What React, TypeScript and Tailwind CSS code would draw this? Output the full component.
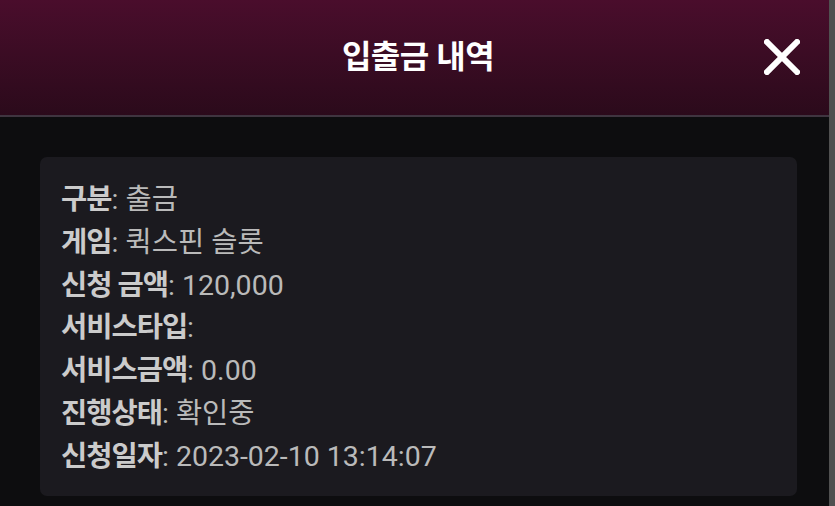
import React from 'react';

const rows: { label: string; value: string }[] = [
  { label: '구분', value: '출금' },
  { label: '게임', value: '퀵스핀 슬롯' },
  { label: '신청 금액', value: '120,000' },
  { label: '서비스타입', value: '' },
  { label: '서비스금액', value: '0.00' },
  { label: '진행상태', value: '확인중' },
  { label: '신청일자', value: '2023-02-10 13:14:07' },
];

export default function App() {
  return (
    <div
      className="flex w-[835px] h-[506px] overflow-hidden bg-[#0d0d0f]"
      style={{ fontFamily: 'Roboto, "Noto Sans CJK KR", sans-serif' }}
    >
      <div className="flex-1 min-w-0 flex flex-col">
        {/* 헤더 */}
        <div className="relative h-[117px] shrink-0 bg-gradient-to-b from-[#4a0d2c] to-[#2b0a1b] border-b-2 border-[#3f3540] flex items-center justify-center pl-[7px]">
          <h1 className="text-white font-bold text-[32px] tracking-[-0.5px] -mt-[1px]">입출금 내역</h1>
          <button className="absolute right-[29px] top-[39px] w-[36px] h-[36px] flex items-center justify-center">
            <svg width="36" height="36" viewBox="0 0 36 36">
              <path d="M3 3 L33 33 M33 3 L3 33" stroke="#fff" strokeWidth="6" strokeLinecap="square" />
            </svg>
          </button>
        </div>

        {/* 내역 */}
        <div className="px-[40px] pt-[40px]">
          <div className="w-[757px] rounded-[7px] bg-[#1b1a1f] pl-[21px] pt-[22px] pb-[17px]">
            {rows.map((r) => (
              <div key={r.label} className="text-[28.5px] leading-[42.8px] whitespace-nowrap">
                <span className="font-bold text-[#cbcbcb] tracking-[-1px]">{r.label}</span>
                <span className="text-[#bababa]">: {r.value}</span>
              </div>
            ))}
          </div>
        </div>
      </div>
      {/* 스크롤바 */}
      <div className="w-[6px] shrink-0 h-full bg-[#505050]" />
    </div>
  );
}
